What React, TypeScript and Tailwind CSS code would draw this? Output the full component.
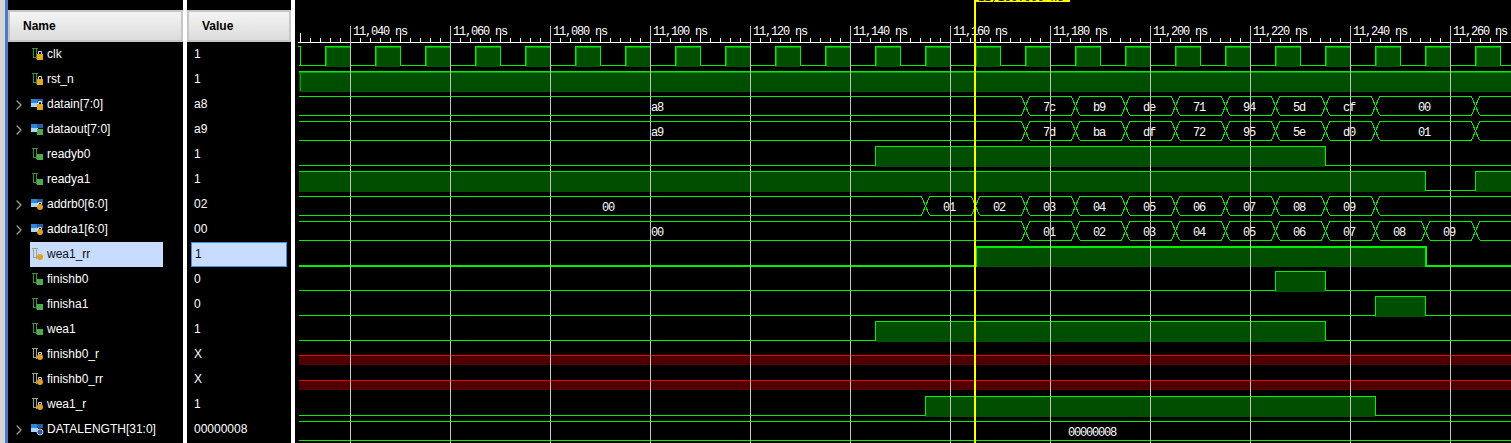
import { ChevronRight } from "lucide-react";

type Badge = "lock" | "green" | "round" | "const";
type Signal = {
  name: string;
  value: string;
  bus?: boolean;
  badge: Badge;
  selected?: boolean;
};

const signals: Signal[] = [
  { name: "clk", value: "1", badge: "lock" },
  { name: "rst_n", value: "1", badge: "lock" },
  { name: "datain[7:0]", value: "a8", bus: true, badge: "lock" },
  { name: "dataout[7:0]", value: "a9", bus: true, badge: "green" },
  { name: "readyb0", value: "1", badge: "green" },
  { name: "readya1", value: "1", badge: "green" },
  { name: "addrb0[6:0]", value: "02", bus: true, badge: "round" },
  { name: "addra1[6:0]", value: "00", bus: true, badge: "round" },
  { name: "wea1_rr", value: "1", badge: "round", selected: true },
  { name: "finishb0", value: "0", badge: "green" },
  { name: "finisha1", value: "0", badge: "green" },
  { name: "wea1", value: "1", badge: "green" },
  { name: "finishb0_r", value: "X", badge: "round" },
  { name: "finishb0_rr", value: "X", badge: "round" },
  { name: "wea1_r", value: "1", badge: "round" },
  { name: "DATALENGTH[31:0]", value: "00000008", bus: true, badge: "const" },
];

const START = 299;
const END = 1511;
const GREEN = "#00f000";
const FILL = "#004f00";
const monoFont = "'Liberation Mono', monospace";

const rowTop = (row: number) => 46 + row * 25;

function IconBadge({ kind }: { kind: Badge }) {
  if (kind === "green") return <rect x="6" y="7" width="6" height="6" fill="#4fa94f" />;
  if (kind === "const") return <circle cx="9" cy="10" r="3" fill="#2f5fa8" stroke="#dfe8f5" strokeWidth="0.8" />;
  if (kind === "round") {
    return (
      <g>
        <path d="M7.5 8V5.5H10.5V8" fill="none" stroke="#cfcfcf" />
        <circle cx="9" cy="10" r="3" fill="#e0a020" />
      </g>
    );
  }
  return (
    <g>
      <path d="M7.5 7V4.5H10.5V7" fill="none" stroke="#d8d8d8" />
      <rect x="6" y="7" width="6" height="6" fill="#e2a91e" />
    </g>
  );
}

function SignalIcon({ signal }: { signal: Signal }) {
  const wire = signal.badge === "round" ? "#9aa58f" : "#3f8f3f";
  return (
    <svg width="14" height="15" viewBox="0 0 14 15" className="shrink-0">
      {signal.bus ? (
        <g shapeRendering="crispEdges">
          <rect x="0" y="2" width="6" height="4" fill="#2f86d8" />
          <rect x="0" y="6" width="6" height="4" fill="#a9d6f5" />
          <rect x="6" y="2" width="6" height="4" fill="#2a5fa5" />
          <rect x="6" y="6" width="1" height="4" fill="#e8f2fb" />
        </g>
      ) : (
        <path
          d="M1 1.5H6.5M2.5 1.5V10.5H5M5.5 1.5V11.5"
          fill="none"
          stroke={wire}
          shapeRendering="crispEdges"
        />
      )}
      <IconBadge kind={signal.badge} />
    </svg>
  );
}

function ColumnHeader({ label, className }: { label: string; className: string }) {
  return (
    <div
      className={`mt-[10px] flex h-[32px] items-center border-2 border-[#c6c6c6] bg-gradient-to-b from-[#f4f4f4] to-[#dcdcdc] text-[12px] font-bold text-black ${className}`}
    >
      {label}
    </div>
  );
}

function NameColumn() {
  return (
    <div className="w-[175px] shrink-0">
      <ColumnHeader label="Name" className="pl-[13px]" />
      {signals.map((s) => (
        <div key={s.name} className="flex h-[25px] items-center">
          <div className="flex w-[22px] shrink-0 justify-end pr-[3px]">
            {s.bus && <ChevronRight size={16} strokeWidth={2} className="text-[#9a9a9a]" />}
          </div>
          <div
            className={`flex h-[25px] w-[133px] items-center gap-[2px] pl-[1px] ${
              s.selected ? "bg-[#c8dcff] text-[#101010]" : "text-white"
            }`}
          >
            <SignalIcon signal={s} />
            <span className="whitespace-nowrap pb-[2px]">{s.name}</span>
          </div>
        </div>
      ))}
    </div>
  );
}

function ValueColumn() {
  return (
    <div className="w-[104px] shrink-0">
      <ColumnHeader label="Value" className="pl-[13px]" />
      {signals.map((s) => (
        <div key={s.name} className="flex h-[25px] items-center pl-[4px]">
          <div
            className={`flex h-[25px] w-[96px] items-center pb-[2px] pl-[3px] ${
              s.selected ? "border border-[#3d93d8] bg-[#c8dcff] text-[#101010]" : "text-white"
            }`}
          >
            {s.value}
          </div>
        </div>
      ))}
    </div>
  );
}

// high = list of [rise, fall] pixels
function Digital({
  row,
  high,
  inner,
}: {
  row: number;
  high: [number, number][];
  inner?: boolean;
}) {
  const top = rowTop(row) + 0.5;
  const low = top + 19;
  const thick = row === 8;
  let d = "";
  let x = START;
  high.forEach(([a, b], i) => {
    const from = a + 0.5;
    const to = b + 0.5;
    if (i === 0 && a <= START) d += `M${START} ${top}`;
    else {
      d += i === 0 ? `M${x} ${low}` : "";
      d += `H${from}V${top}`;
    }
    d += b >= END ? `H${END}` : `H${to}V${low}`;
    x = to;
  });
  if (high[high.length - 1][1] < END) d += `H${END}`;
  return (
    <g>
      {high.map(([a, b]) => (
        <rect key={a} x={a} y={top} width={Math.min(b, END) - a} height={20} fill={FILL} />
      ))}
      {inner &&
        high.map(([a, b]) => (
          <g key={a} fill="#00a000">
            <rect x={a} y={top + 0.5} width={Math.min(b, END) - a} height={1} />
            <rect x={a + 1} y={top} width={1} height={19} />
          </g>
        ))}
      <path d={d} fill="none" stroke={GREEN} strokeWidth={thick ? 2 : 1} />
    </g>
  );
}

function Bus({
  row,
  changes,
  labels,
}: {
  row: number;
  changes: number[];
  labels: { x: number; text: string }[];
}) {
  const top = rowTop(row) + 0.5;
  const low = top + 19;
  const edges = [START, ...changes.map((c) => c + 0.5), END];
  let d = "";
  edges.slice(0, -1).forEach((e, i) => {
    const a = i === 0 ? e : e + 4;
    const next = edges[i + 1];
    const b = i === edges.length - 2 ? next : next - 4;
    d += `M${a} ${top}H${b}M${a} ${low}H${b}`;
    if (i < edges.length - 2) d += `M${b} ${top}L${next + 4} ${low}M${b} ${low}L${next + 4} ${top}`;
  });
  return (
    <g>
      <path d={d} fill="none" stroke={GREEN} />
      {labels.map((l) => (
        <text
          key={l.x}
          x={l.x}
          y={top + 14.5}
          fill="#fff"
          fontFamily={monoFont}
          fontSize={12}
          letterSpacing={-1.2}
          textAnchor="middle"
          shapeRendering="auto"
        >
          {l.text}
        </text>
      ))}
    </g>
  );
}

const range = (from: number, count: number, step: number) =>
  Array.from({ length: count }, (_, i) => from + i * step);

const seq = (from: number, vals: string[]) => vals.map((text, i) => ({ x: from + i * 50, text }));

function Ruler() {
  const ticks = range(300, 121, 10);
  const majors = range(350, 12, 100);
  return (
    <g>
      <rect x={298} y={42} width={1213} height={1} fill="#fff" />
      {ticks.map((x) => {
        const major = (x - 350) % 100 === 0;
        const mid = (x - 300) % 100 === 0;
        const y = major ? 26 : mid ? 33 : 38;
        return <rect key={x} x={x} y={y} width={1} height={42 - y} fill="#fff" />;
      })}
      {majors.map((x, i) => (
        <text
          key={x}
          x={x + 3}
          y={35}
          fill="#fff"
          fontFamily={monoFont}
          fontSize={12}
          letterSpacing={-1.2}
        >
          {`11,${String(40 + i * 20).padStart(3, "0")} ns`}
        </text>
      ))}
    </g>
  );
}

function Waves() {
  const clock = range(325, 24, 50).map((a) => [a, a + 25] as [number, number]);
  return (
    <svg
      width={1216}
      height={443}
      viewBox="295 0 1216 443"
      className="block"
      shapeRendering="crispEdges"
    >
      <Ruler />

      <path d={`M298 46.5H300.5V65.5H325`} fill="none" stroke={GREEN} />
      <Digital row={0} high={clock} inner />
      <Digital row={1} high={[[299, 1511]]} inner />
      <Bus
        row={2}
        changes={[1025, 1075, 1125, 1175, 1225, 1275, 1325, 1375, 1475]}
        labels={[
          { x: 657, text: "a8" },
          ...seq(1049, ["7c", "b9", "de", "71", "94", "5d", "cf"]),
          { x: 1424, text: "00" },
        ]}
      />
      <Bus
        row={3}
        changes={[1025, 1075, 1125, 1175, 1225, 1275, 1325, 1375, 1475]}
        labels={[
          { x: 657, text: "a9" },
          ...seq(1049, ["7d", "ba", "df", "72", "95", "5e", "d0"]),
          { x: 1424, text: "01" },
        ]}
      />
      <Digital row={4} high={[[875, 1325]]} />
      <Digital row={5} high={[[299, 1425], [1475, 1511]]} />
      <Bus
        row={6}
        changes={[925, 975, 1025, 1075, 1125, 1175, 1225, 1275, 1325, 1375]}
        labels={[
          { x: 608, text: "00" },
          ...seq(949, ["01", "02", "03", "04", "05", "06", "07", "08", "09"]),
        ]}
      />
      <Bus
        row={7}
        changes={[1025, 1075, 1125, 1175, 1225, 1275, 1325, 1375, 1425, 1475]}
        labels={[
          { x: 657, text: "00" },
          ...seq(1049, ["01", "02", "03", "04", "05", "06", "07", "08", "09"]),
        ]}
      />
      <Digital row={8} high={[[975, 1425]]} />
      <Digital row={9} high={[[1275, 1325]]} />
      <Digital row={10} high={[[1375, 1425]]} />
      <Digital row={11} high={[[875, 1325]]} />

      {[355, 380].map((y) => (
        <g key={y}>
          <rect x={299} y={y} width={1212} height={10} fill="#500000" />
          <rect x={299} y={y} width={1212} height={1} fill="#f00000" />
        </g>
      ))}

      <Digital row={14} high={[[925, 1375]]} />
      <Bus row={15} changes={[]} labels={[{ x: 1092, text: "00000008" }]} />

      {range(350, 12, 100).map((x) => (
        <rect key={x} x={x} y={26} width={1} height={417} fill="#c4c4c4" />
      ))}

      <rect x={974} y={0} width={2} height={443} fill="#ffff00" />
      <rect x={974} y={0} width={96} height={2} fill="#ffff00" />
      <text x={978} y={1} fill="#000" fontFamily={monoFont} fontSize={11}>
        11,160.000 ns
      </text>
    </svg>
  );
}

export default function App() {
  return (
    <div className="flex h-[443px] w-[1511px] overflow-hidden bg-black font-['Liberation_Sans',sans-serif] text-[12px]">
      <div className="w-[5px] shrink-0 bg-[#d6d6d6]" />
      <div className="w-[3px] shrink-0 bg-[#4a7bcb]" />
      <NameColumn />
      <div className="w-[4px] shrink-0 bg-white" />
      <ValueColumn />
      <div className="w-[4px] shrink-0 bg-white" />
      <div className="min-w-0 flex-1">
        <Waves />
      </div>
    </div>
  );
}
